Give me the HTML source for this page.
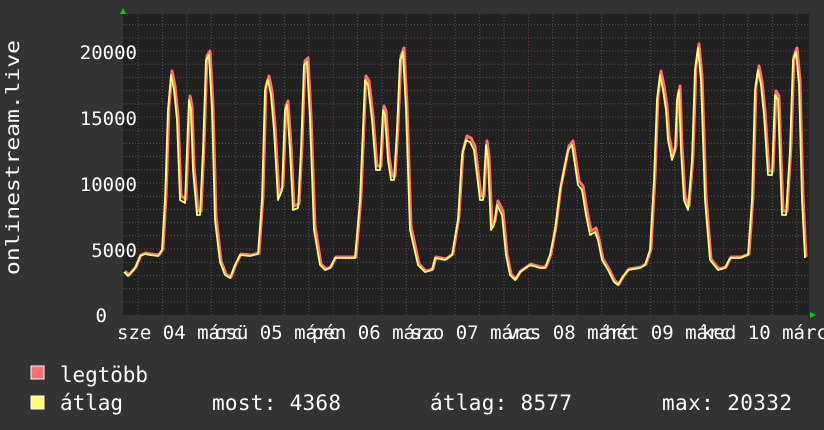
<!DOCTYPE html><html><head><meta charset="utf-8"><style>body{margin:0;background:#333}svg{display:block}text{font-family:"DejaVu Sans Mono","Liberation Mono",monospace;fill:#fff}</style></head><body>
<svg width="824" height="430" viewBox="0 0 824 430" xmlns="http://www.w3.org/2000/svg">
<rect width="824" height="430" fill="#333"/>
<rect x="123" y="14" width="686" height="301" fill="#212121"/>
<g id="grid"></g>
<path id="red" fill="none" stroke="#ff7070" stroke-width="3" stroke-linejoin="round"/>
<path id="yel" fill="none" stroke="#ffff70" stroke-width="1.8" stroke-linejoin="round"/>
<polygon points="120,14 126,14 123,8" fill="#0c0"/>
<polygon points="810,312 810,318 816,315" fill="#0c0"/>
<g font-size="19" text-anchor="end">
<text x="137" y="59">20000</text><text x="137" y="125">15000</text><text x="137" y="191">10000</text><text x="137" y="257">5000</text><text x="107" y="322">0</text>
</g>
<text transform="translate(19,275) rotate(-90)" font-size="19" textLength="235" lengthAdjust="spacingAndGlyphs">onlinestream.live</text>
<g font-size="19">
<text x="117" y="339">sze 04 márc</text><text x="214" y="339">csü 05 márc</text><text x="312" y="339">pén 06 márc</text><text x="410" y="339">szo 07 márc</text><text x="507" y="339">vas 08 márc</text><text x="605" y="339">hét 09 márc</text><text x="702" y="339">ked 10 márc</text>
</g>
<rect x="31" y="366" width="13" height="13" fill="#ff7070" stroke="#fff" stroke-width="1"/>
<rect x="31" y="396" width="13" height="13" fill="#ffff70" stroke="#fff" stroke-width="1"/>
<g font-size="21">
<text x="60" y="382" textLength="88">legtöbb</text>
<text x="60" y="410" textLength="63">átlag</text>
<text x="212" y="410" textLength="129">most: 4368</text>
<text x="430" y="410" textLength="142">átlag: 8577</text>
<text x="662" y="410" textLength="130">max: 20332</text>
</g>
</svg>
<script>
var NS="http://www.w3.org/2000/svg",g=document.getElementById('grid');
function ln(x1,y1,x2,y2,c){var l=document.createElementNS(NS,'line');l.setAttribute('x1',x1);l.setAttribute('y1',y1);l.setAttribute('x2',x2);l.setAttribute('y2',y2);l.setAttribute('stroke',c);l.setAttribute('stroke-dasharray','1,2');g.appendChild(l);}
for(var v=1000;v<=22000;v+=1000){var y=315-v*0.0132;ln(123,y,809,y,v%5000?'#555':'#7a3a3a');}
for(var k=-1;k<30;k++){var x=138+24.4*k;if(x<123||x>809)continue;ln(x,14,x,315,k%4?'#555':'#7a3a3a');}
var p=[124,272,128,276,135,268,140,256,145,254,150,255,158,256,162,250,165,200,168,110,171,75,174,90,177,120,180,200,185,203,187,150,189,100,191,110,193,170,197,215,200,215,203,150,206,60,209,55,212,110,215,220,220,262,225,275,230,278,235,265,240,255,250,256,258,254,262,200,265,90,268,80,271,95,274,130,278,200,282,190,285,110,287,105,290,150,293,210,298,208,301,150,304,65,307,62,310,120,314,230,320,265,325,270,330,268,335,258,345,258,355,258,360,200,365,80,368,85,372,120,376,170,380,170,383,110,385,115,388,160,391,180,394,180,397,130,400,60,403,52,406,110,410,230,418,265,425,272,432,270,435,258,445,260,452,255,458,220,462,155,466,140,470,142,474,150,477,175,480,200,483,200,486,145,488,160,491,230,494,225,497,205,502,215,506,255,510,275,515,280,520,272,530,265,540,268,545,268,550,255,555,230,560,190,564,170,568,150,572,145,575,165,578,185,582,190,586,215,590,235,595,232,598,240,602,260,608,270,614,282,618,285,622,278,628,270,640,268,645,265,650,250,654,180,657,100,660,75,663,90,666,110,668,140,672,160,675,150,677,100,679,90,681,150,684,200,688,210,692,160,695,70,698,48,701,80,705,200,710,260,718,270,725,268,730,258,740,258,748,255,752,200,755,90,758,70,761,85,764,115,768,175,772,175,775,95,778,100,780,160,782,215,786,215,790,150,793,60,796,52,799,85,802,200,805,258];
var d='',r='';for(var i=0;i<p.length;i+=2){var y=p[i+1];d+=(i?'L':'M')+p[i]+' '+y;r+=(i?'L':'M')+(p[i]+1)+' '+(y<240?y-4:y-1);}
document.getElementById('yel').setAttribute('d',d);document.getElementById('red').setAttribute('d',r);
</script>
</body></html>
